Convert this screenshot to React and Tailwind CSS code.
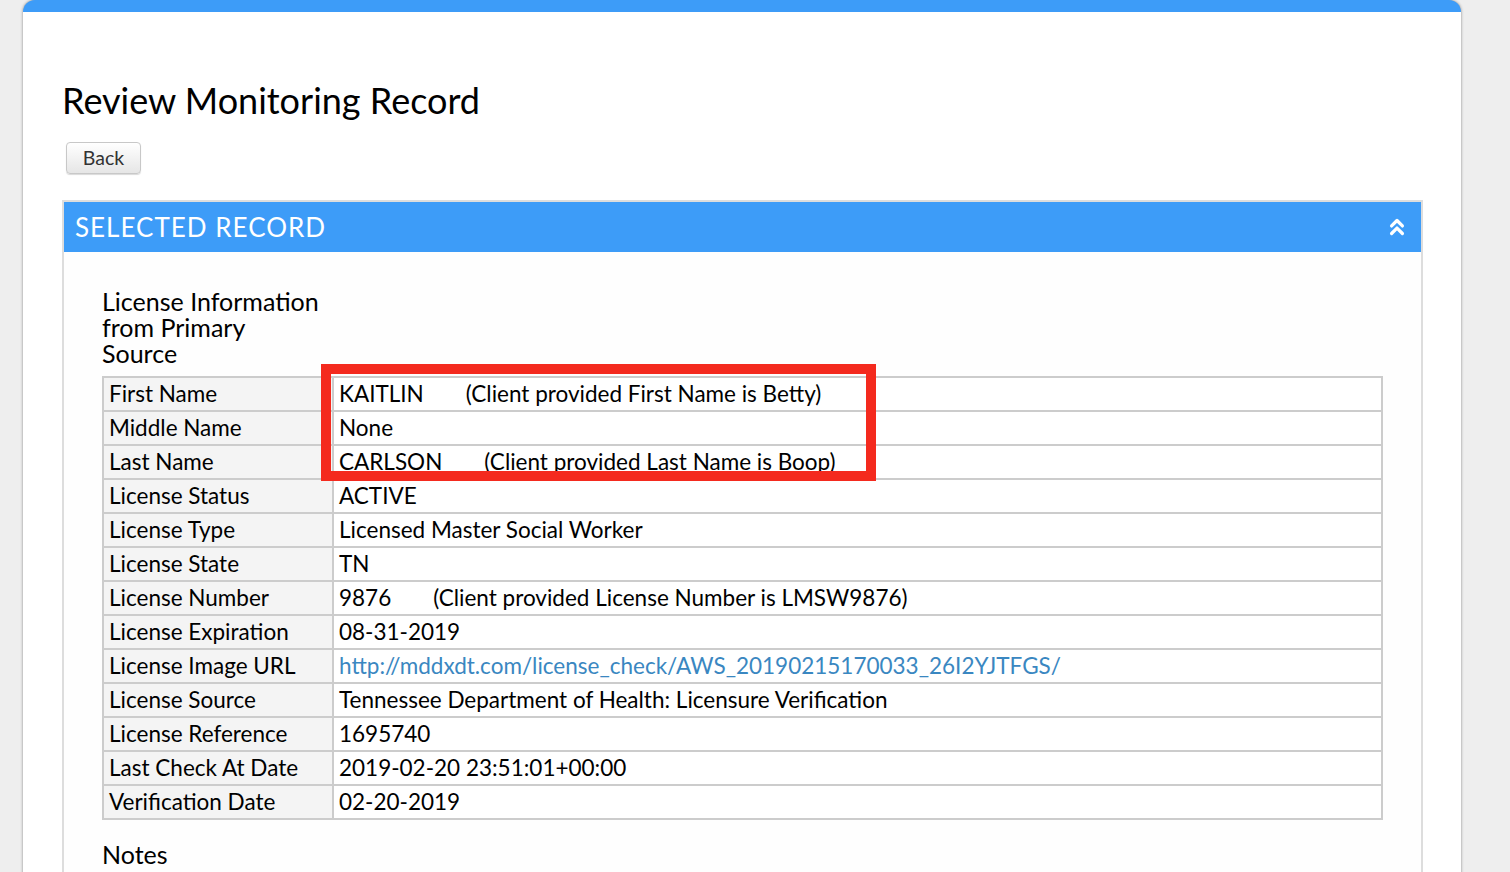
import { ChevronsUp } from 'lucide-react'

const rows = [
  { label: 'First Name', value: 'KAITLIN', note: '(Client provided First Name is Betty)' },
  { label: 'Middle Name', value: 'None' },
  { label: 'Last Name', value: 'CARLSON', note: '(Client provided Last Name is Boop)' },
  { label: 'License Status', value: 'ACTIVE' },
  { label: 'License Type', value: 'Licensed Master Social Worker' },
  { label: 'License State', value: 'TN' },
  { label: 'License Number', value: '9876', note: '(Client provided License Number is LMSW9876)' },
  { label: 'License Expiration', value: '08-31-2019' },
  { label: 'License Image URL', value: 'http://mddxdt.com/license_check/AWS_20190215170033_26I2YJTFGS/', link: true },
  { label: 'License Source', value: 'Tennessee Department of Health: Licensure Verification' },
  { label: 'License Reference', value: '1695740' },
  { label: 'Last Check At Date', value: '2019-02-20 23:51:01+00:00' },
  { label: 'Verification Date', value: '02-20-2019' },
]

export default function App() {
  return (
    <div
      className="min-h-screen bg-[#eeeeee] pl-[23px] pr-[49px] overflow-hidden"
      style={{ fontFamily: 'Lato, "Open Sans", sans-serif' }}
    >
      <div className="min-h-[872px] bg-white border-t-[12px] border-[#3d9cf8] rounded-t-[12px] shadow-[0_0_3px_rgba(0,0,0,0.45)] pl-[39px] pr-[38px] pt-[66px]">
        <h1 className="text-[36px] leading-[44px] text-black">Review Monitoring Record</h1>

        <button className="mt-[20px] ml-[4px] w-[75px] h-[32px] rounded-[4px] border border-[#c8c8c8] bg-gradient-to-b from-white to-[#e6e6e6] shadow-[0_1px_1px_rgba(0,0,0,0.15)] text-[19.5px] text-[#333]">
          Back
        </button>

        {/* Selected record panel */}
        <div className="mt-[26px] border-2 border-[#dddddd]">
          <div className="flex items-center justify-between h-[50px] bg-[#3d9cf8] pl-[11px] pr-[11px]">
            <span className="text-white text-[26px] tracking-[1px]">SELECTED RECORD</span>
            <ChevronsUp size={26} strokeWidth={3} className="text-white" />
          </div>

          <div className="px-[38px] pt-[36px] pb-[20px] bg-[#fefefe]">
            <h2 className="w-[220px] text-[25px] leading-[26px] text-black">
              License Information from Primary Source
            </h2>

            <div className="relative mt-[10px]">
              <table className="w-full border-collapse text-[22.5px] text-black">
                <tbody>
                  {rows.map((r) => (
                    <tr key={r.label} className="h-[34px]">
                      <td className="w-[230px] border-2 border-[#cccccc] bg-[#f4f4f4] px-[5px] py-0 leading-[30px] whitespace-nowrap">
                        {r.label}
                      </td>
                      <td className="border-2 border-[#cccccc] bg-white px-[5px] py-0 leading-[30px] whitespace-nowrap">
                        {r.link ? (
                          <a href="#" className="text-[#3a87c1]">{r.value}</a>
                        ) : (
                          r.value
                        )}
                        {r.note && <span className="ml-[42px]">{r.note}</span>}
                      </td>
                    </tr>
                  ))}
                </tbody>
              </table>

              {/* annotation box */}
              <div className="absolute left-[219px] top-[-12px] w-[555px] h-[117px] border-[10px] border-[#f42a1e] pointer-events-none" />
            </div>

            <h2 className="mt-[19px] text-[25px] leading-[30px] text-black">Notes</h2>
          </div>
        </div>
      </div>
    </div>
  )
}
